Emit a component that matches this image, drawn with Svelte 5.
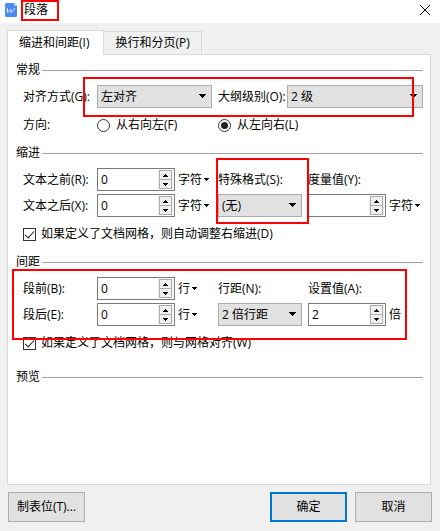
<script lang="ts">
    let activeTab = $state("indent");
    let align = $state("左对齐");
    let outline = $state("2 级");
    let direction = $state("ltr");
    let special = $state("(无)");
    let lineSpacing = $state("2 倍行距");
    let snapIndent = $state(true);
    let snapGrid = $state(true);

    let values: Record<string, string> = $state({
        before: "0",
        after: "0",
        measure: "",
        above: "0",
        below: "0",
        setting: "2",
    });

    function step(key: string, delta: number) {
        values[key] = String(Math.max(0, (Number(values[key]) || 0) + delta));
    }
</script>

{#snippet caret()}
    <svg class="caret" viewBox="0 0 7 4" aria-hidden="true">
        <path d="M0 0H7V1H6V2H5V3H4V4H3V3H2V2H1V1H0Z" />
    </svg>
{/snippet}

{#snippet spinner(key: string)}
    <span class="spinner">
        <input id={key} type="text" inputmode="decimal" bind:value={values[key]} />
        <span class="spin-buttons">
            <button type="button" aria-label="增加" onclick={() => step(key, 1)}>
                <svg viewBox="0 0 5 3" aria-hidden="true"><path d="M0 3V2H1V1H2V0H3V1H4V2H5V3Z" /></svg>
            </button>
            <button type="button" aria-label="减少" onclick={() => step(key, -1)}>
                <svg viewBox="0 0 5 3" aria-hidden="true"><path d="M0 0H5V1H4V2H3V3H2V2H1V1H0Z" /></svg>
            </button>
        </span>
    </span>
{/snippet}

{#snippet unit(text: string)}
    <button type="button" class="unit">
        {text}
        <svg viewBox="0 0 5 3" aria-hidden="true"><path d="M0 0H5V1H4V2H3V3H2V2H1V1H0Z" /></svg>
    </button>
{/snippet}

<div class="dialog">
    <header class="titlebar">
        <svg class="logo" viewBox="0 0 12 14" aria-hidden="true">
            <path d="M1.5 0H9L12 3V12.5Q12 14 10.5 14H1.5Q0 14 0 12.5V1.5Q0 0 1.5 0Z" fill="#4b8bf4" />
            <path d="M9 0L12 3H9Z" fill="#a9c8fb" />
            <path d="M2.5 5V9.5L6 6.5V9.5L9.5 6V5" fill="none" stroke="#d9e7fe" />
        </svg>
        <h1 class="title">段落<span class="mark mark-title"></span></h1>
        <button type="button" class="close" aria-label="关闭">
            <svg viewBox="0 0 10 10" aria-hidden="true"><path d="M0 0L10 10M10 0L0 10" /></svg>
        </button>
    </header>

    <div class="body">
        <div class="tabs" role="tablist">
            <button type="button" role="tab" class="tab" class:active={activeTab === "indent"}
                aria-selected={activeTab === "indent"} onclick={() => (activeTab = "indent")}>缩进和间距(I)</button>
            <button type="button" role="tab" class="tab" class:active={activeTab === "break"}
                aria-selected={activeTab === "break"} onclick={() => (activeTab = "break")}>换行和分页(P)</button>
        </div>

        <main class="panel">
            <section>
                <h2>常规</h2>
                <div class="row general">
                    <label for="align">对齐方式(G):</label>
                    <span class="select align">
                        <select id="align" bind:value={align}>
                            <option>左对齐</option>
                            <option>居中对齐</option>
                            <option>右对齐</option>
                        </select>
                        {@render caret()}
                    </span>
                    <label for="outline">大纲级别(O):</label>
                    <span class="select">
                        <select id="outline" bind:value={outline}>
                            <option>1 级</option>
                            <option>2 级</option>
                            <option>3 级</option>
                        </select>
                        {@render caret()}
                    </span>
                </div>
                <div class="row direction" role="radiogroup" aria-label="方向">
                    <span>方向:</span>
                    <label class="choice">
                        <input type="radio" value="rtl" bind:group={direction} />从右向左(F)
                    </label>
                    <label class="choice">
                        <input type="radio" value="ltr" bind:group={direction} />从左向右(L)
                    </label>
                </div>
            </section>

            <section>
                <h2>缩进</h2>
                <div class="row">
                    <label for="before">文本之前(R):</label>
                    <span class="field">{@render spinner("before")}{@render unit("字符")}</span>
                    <label for="special">特殊格式(S):</label>
                    <label for="measure">度量值(Y):</label>
                </div>
                <div class="row">
                    <label for="after">文本之后(X):</label>
                    <span class="field">{@render spinner("after")}{@render unit("字符")}</span>
                    <span class="select short">
                        <select id="special" bind:value={special}>
                            <option>(无)</option>
                            <option>首行缩进</option>
                            <option>悬挂缩进</option>
                        </select>
                        {@render caret()}
                    </span>
                    <span class="field">{@render spinner("measure")}{@render unit("字符")}</span>
                </div>
                <label class="choice check">
                    <input type="checkbox" bind:checked={snapIndent} />如果定义了文档网格，则自动调整右缩进(D)
                </label>
            </section>

            <section class="spacing">
                <h2>间距</h2>
                <div class="row">
                    <label for="above">段前(B):</label>
                    <span class="field">{@render spinner("above")}{@render unit("行")}</span>
                    <label for="spacing">行距(N):</label>
                    <label for="setting">设置值(A):</label>
                </div>
                <div class="row">
                    <label for="below">段后(E):</label>
                    <span class="field">{@render spinner("below")}{@render unit("行")}</span>
                    <span class="select short">
                        <select id="spacing" bind:value={lineSpacing}>
                            <option>单倍行距</option>
                            <option>1.5 倍行距</option>
                            <option>2 倍行距</option>
                        </select>
                        {@render caret()}
                    </span>
                    <span class="field">{@render spinner("setting")}<span>倍</span></span>
                </div>
                <label class="choice check">
                    <input type="checkbox" bind:checked={snapGrid} />如果定义了文档网格，则与网格对齐(W)
                </label>
            </section>

            <section>
                <h2>预览</h2>
            </section>

            <span class="mark mark-general"></span>
            <span class="mark mark-special"></span>
            <span class="mark mark-spacing"></span>
        </main>

        <footer class="actions">
            <button type="button" class="btn">制表位(T)...</button>
            <button type="button" class="btn primary">确定</button>
            <button type="button" class="btn">取消</button>
        </footer>
    </div>
</div>

<style>
    :global(body) {
        background: #f0f0f0;
    }

    .dialog {
        display: flex;
        flex-direction: column;
        box-sizing: border-box;
        min-height: 100vh;
        background: #f0f0f0;
        color: #000;
        font: 12px/16px "Open Sans", "Noto Sans CJK SC", sans-serif;
    }

    .dialog *,
    .dialog *::before {
        box-sizing: border-box;
    }

    button,
    input,
    select {
        margin: 0;
        padding: 0;
        border: 0;
        border-radius: 0;
        background: none;
        color: inherit;
        font: inherit;
    }

    .titlebar {
        display: flex;
        align-items: center;
        height: 23px;
        padding: 0 10px 3px 5px;
        background: #fff;
    }

    .logo {
        width: 12px;
        height: 14px;
    }

    .title {
        position: relative;
        margin: 0 auto 0 7px;
        font-size: 12px;
        font-weight: 400;
    }

    .close {
        display: flex;
    }

    .close svg {
        width: 10px;
        height: 10px;
        overflow: visible;
        stroke: #000;
        stroke-width: 1;
    }

    .body {
        display: flex;
        flex: 1;
        flex-direction: column;
        padding: 7px 8px 9px 7px;
    }

    .tabs {
        display: flex;
        align-items: flex-end;
    }

    .tab {
        height: 23px;
        padding: 0 11px;
        border: 1px solid #d9d9d9;
        border-bottom: 0;
        border-left: 0;
    }

    .tab.active {
        position: relative;
        z-index: 1;
        height: 25px;
        margin-bottom: -1px;
        padding: 0 14px 0 11px;
        border-left: 1px solid #d9d9d9;
        background: #fff;
    }

    .panel {
        position: relative;
        flex: 1;
        margin-right: 1px;
        padding: 6px 7px 0 8px;
        border: 1px solid #d9d9d9;
        background: #fff;
    }

    section {
        margin-bottom: 11px;
    }

    .spacing {
        margin-bottom: 17px;
    }

    h2 {
        display: flex;
        align-items: center;
        gap: 2px;
        height: 18px;
        margin: 0 0 6px;
        font-size: 12px;
        font-weight: 400;
    }

    h2::after {
        content: "";
        flex: 1;
        height: 1px;
        background: #a0a0a0;
    }

    .row {
        display: grid;
        grid-template-columns: 74px 121px 90px 1fr;
        align-items: center;
        height: 23px;
        margin-bottom: 3px;
        padding-left: 7px;
        white-space: nowrap;
    }

    .general {
        grid-template-columns: 74px 121px 69px 1fr;
        margin-bottom: 9px;
    }

    .direction {
        grid-template-columns: 74px 121px 1fr;
        height: 16px;
        margin-bottom: 0;
    }

    .select {
        position: relative;
        display: flex;
        height: 23px;
    }

    .select.align {
        width: 115px;
    }

    .select.short {
        width: 84px;
    }

    select {
        width: 100%;
        padding: 0 16px 0 3px;
        border: 1px solid #adadad;
        background: #e1e1e1;
        appearance: none;
    }

    .caret {
        position: absolute;
        top: 9px;
        right: 6px;
        width: 7px;
        height: 4px;
        pointer-events: none;
    }

    .field {
        display: flex;
        align-items: center;
        gap: 3px;
    }

    .spinner {
        display: flex;
        width: 78px;
        height: 23px;
        padding: 1px;
        border: 1px solid #7a7a7a;
        background: #fff;
    }

    .spinner input {
        flex: 1;
        min-width: 0;
        padding-left: 2px;
        outline: none;
    }

    .spin-buttons {
        display: flex;
        flex-direction: column;
        width: 15px;
        padding: 0 1px;
        background: #f0f0f0;
    }

    .spin-buttons button {
        display: flex;
        flex: 1;
        align-items: center;
        justify-content: center;
        border: 1px solid #acacac;
        background: #f0f0f0;
    }

    .spin-buttons button + button {
        margin-top: -1px;
    }

    .spin-buttons svg,
    .unit svg {
        width: 5px;
        height: 3px;
        shape-rendering: crispEdges;
    }

    .unit {
        display: flex;
        align-items: center;
        gap: 2px;
    }

    .choice {
        display: flex;
        align-items: center;
        gap: 6px;
        height: 16px;
    }

    .choice input {
        display: grid;
        place-content: center;
        width: 13px;
        height: 13px;
        border: 1px solid #333;
        background: #fff;
        appearance: none;
    }

    .choice input[type="radio"] {
        border-radius: 50%;
    }

    .choice input[type="radio"]:checked::before {
        content: "";
        width: 7px;
        height: 7px;
        border-radius: 50%;
        background: #222;
    }

    .choice input[type="checkbox"]:checked::before {
        content: "";
        width: 5px;
        height: 9px;
        margin-bottom: 2px;
        border: solid #222;
        border-width: 0 1px 1px 0;
        transform: rotate(42deg);
    }

    .check {
        gap: 5px;
        margin-top: 9px;
        padding-left: 7px;
    }

    .actions {
        display: flex;
        gap: 8px;
        margin-top: 7px;
        padding-left: 1px;
    }

    .btn {
        width: 77px;
        height: 30px;
        border: 1px solid #adadad;
        background: #e1e1e1;
    }

    .btn.primary {
        margin-left: auto;
        border: 2px solid #0078d7;
    }

    .mark {
        position: absolute;
        z-index: 2;
        border: 2px solid #f00;
        pointer-events: none;
    }

    .mark-title {
        top: -2px;
        left: -3px;
        width: 38px;
        height: 21px;
    }

    .mark-general {
        top: 22px;
        right: 16px;
        left: 75px;
        height: 40px;
    }

    .mark-special {
        top: 103px;
        left: 208px;
        width: 93px;
        height: 66px;
    }

    .mark-spacing {
        top: 214px;
        right: 23px;
        left: 4px;
        height: 71px;
    }
</style>
